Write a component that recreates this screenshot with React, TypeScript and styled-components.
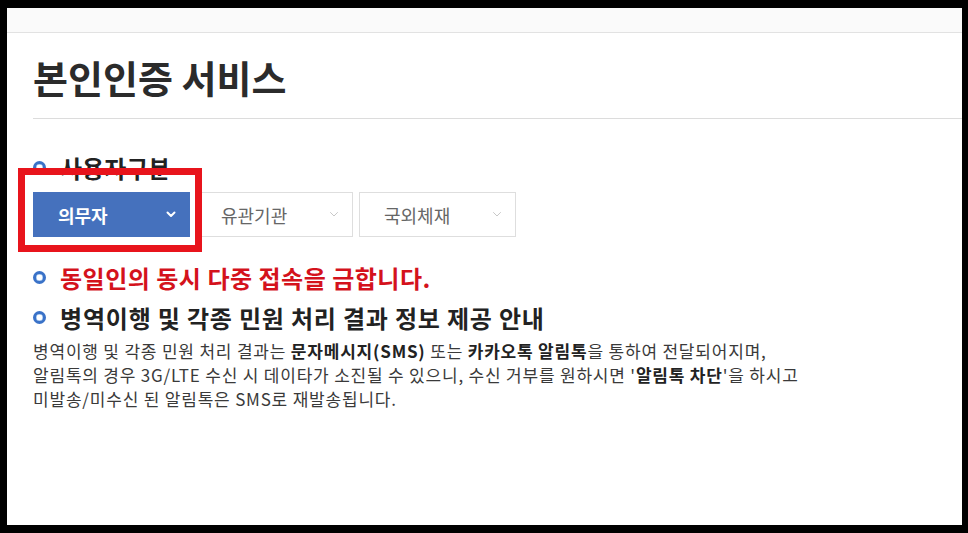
import React from "react";
import styled, { createGlobalStyle } from "styled-components";

const GlobalStyle = createGlobalStyle`
  html, body { margin: 0; padding: 0; background: #000; }
  body { font-family: "Noto Sans CJK KR", "Noto Sans", sans-serif; }
  * { box-sizing: border-box; }
`;

const Frame = styled.div`
  width: 968px;
  height: 533px;
  padding: 8px 6px 8px 7px;
  background: #000;
`;

const Page = styled.div`
  height: 100%;
  background: #fff;
  display: flex;
  flex-direction: column;
  overflow: hidden;
`;

const TopStrip = styled.div`
  height: 25px;
  background: #fafafa;
  border-bottom: 1px solid #e2e2e2;
  flex-shrink: 0;
`;

const Content = styled.div`
  padding-left: 26px;
  display: flex;
  flex-direction: column;
`;

const TitleBar = styled.div`
  height: 86px;
  border-bottom: 1px solid #dcdcdc;
  display: flex;
  align-items: center;
  padding-top: 2px;
`;

const Title = styled.h1`
  margin: 0;
  font-size: 38px;
  font-weight: 700;
  color: #2b2b2b;
  line-height: 1;
`;

const Section = styled.div`
  margin-top: 33px;
  display: flex;
  flex-direction: column;
`;

const Bullet = styled.span`
  width: 13px;
  height: 13px;
  border-radius: 50%;
  border: 3px solid #3a72c8;
  box-shadow: inset 0 0 0 0.5px #7fb0ea;
  flex-shrink: 0;
`;

const HeadingRow = styled.div<{ $size: number; $color: string; $spacing?: number }>`
  display: flex;
  align-items: center;
  gap: 14px;
  font-size: ${(p) => p.$size}px;
  font-weight: 700;
  color: ${(p) => p.$color};
  letter-spacing: ${(p) => p.$spacing ?? 0}px;
  line-height: 1.3;
  white-space: nowrap;
`;

const SelectRow = styled.div`
  position: relative;
  display: flex;
  gap: 6px;
  margin-top: 9px;
`;

const Select = styled.div<{ $active?: boolean }>`
  width: 157px;
  height: 45px;
  display: flex;
  align-items: center;
  justify-content: space-between;
  padding: 0 13px 0 24px;
  background: ${(p) => (p.$active ? "#4571bd" : "#fff")};
  border: 1px solid ${(p) => (p.$active ? "#4571bd" : "#dedede")};
  color: ${(p) => (p.$active ? "#fff" : "#666")};
  font-size: 18px;
  font-weight: ${(p) => (p.$active ? 700 : 400)};
`;

const Highlight = styled.div`
  position: absolute;
  left: -15px;
  top: -24px;
  width: 184px;
  height: 84px;
  border: 7px solid #e8141c;
  pointer-events: none;
`;

const Notices = styled.div`
  margin-top: 25px;
  display: flex;
  flex-direction: column;
  gap: 9px;
`;

const Paragraph = styled.p`
  margin: 5px 0 0;
  font-size: 17px;
  line-height: 24px;
  color: #3a3a3a;
  letter-spacing: 0.8px;
  white-space: nowrap;
  b { color: #222; font-weight: 700; }
`;

const Chevron = ({ color, width }: { color: string; width: number }) => (
  <svg width="10" height="7" viewBox="0 0 10 7" fill="none">
    <path d="M1.5 1.5 L5 5 L8.5 1.5" stroke={color} strokeWidth={width} strokeLinecap="round" strokeLinejoin="round" />
  </svg>
);

const options = [
  { label: "의무자", active: true },
  { label: "유관기관", active: false },
  { label: "국외체재", active: false },
];

export default function App() {
  return (
    <>
      <GlobalStyle />
      <Frame>
        <Page>
          <TopStrip />
          <Content>
            <TitleBar>
              <Title>본인인증 서비스</Title>
            </TitleBar>
            <Section>
              <HeadingRow $size={24} $color="#222">
                <Bullet />
                사용자구분
              </HeadingRow>
              <SelectRow>
                {options.map((o) => (
                  <Select key={o.label} $active={o.active}>
                    {o.label}
                    {o.active ? <Chevron color="#fff" width={2} /> : <Chevron color="#c8c8c8" width={1} />}
                  </Select>
                ))}
                <Highlight />
              </SelectRow>
            </Section>
            <Notices>
              <HeadingRow $size={24} $color="#d4121c" $spacing={0.5}>
                <Bullet />
                동일인의 동시 다중 접속을 금합니다.
              </HeadingRow>
              <HeadingRow $size={24} $color="#222" $spacing={0.8}>
                <Bullet />
                병역이행 및 각종 민원 처리 결과 정보 제공 안내
              </HeadingRow>
            </Notices>
            <Paragraph>
              병역이행 및 각종 민원 처리 결과는 <b>문자메시지(SMS)</b> 또는 <b>카카오톡 알림톡</b>을 통하여 전달되어지며,
              <br />
              알림톡의 경우 3G/LTE 수신 시 데이타가 소진될 수 있으니, 수신 거부를 원하시면 '<b>알림톡 차단</b>'을 하시고
              <br />
              미발송/미수신 된 알림톡은 SMS로 재발송됩니다.
            </Paragraph>
          </Content>
        </Page>
      </Frame>
    </>
  );
}
